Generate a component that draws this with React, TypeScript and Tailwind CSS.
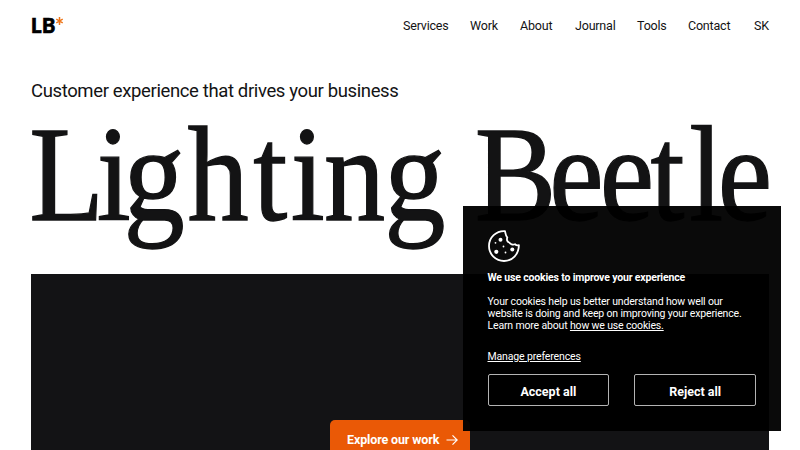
const navItems = [
  { label: "Services", className: "w-[45px]" },
  { label: "Work", className: "w-[28px]" },
  { label: "About", className: "w-[33px]" },
  { label: "Journal", className: "w-[40px]" },
  { label: "Tools", className: "w-[29px]" },
  { label: "Contact", className: "w-[44px]" },
  { label: "SK", className: "w-[15px]" },
]

function Logo() {
  return (
    <a href="#" className="flex h-5 items-start pb-[2px] font-['Lato',sans-serif] text-[20px] leading-[18px] font-black tracking-[0.5px] text-black [-webkit-text-stroke:0.7px_black]">
      LB
      <svg viewBox="0 0 8 9" className="mt-px h-2 w-[7px]" fill="none" stroke="#ee7518" strokeWidth="1.7">
        <path d="M4 0v9M.3 2.3l7.4 4.4M7.7 2.3L.3 6.7" />
      </svg>
    </a>
  )
}

function Header() {
  return (
    <header className="flex h-[52px] items-center justify-between">
      <Logo />
      <nav className="flex gap-[22px] text-[12.5px] leading-4 tracking-[-0.2px]">
        {navItems.map((item) => (
          <a key={item.label} href="#" className={`${item.className} whitespace-nowrap`}>
            {item.label}
          </a>
        ))}
      </nav>
    </header>
  )
}

function CookieIcon() {
  return (
    <svg viewBox="0 0 32 32" className="size-8" fill="none" stroke="white" strokeWidth="1.8" strokeLinejoin="round">
      <path d="M17 1.1C8 .6 1 7.5 1 16c0 8.300 6.700 15 15 15s14.800-6.700 14.900-15.800c-1.500.5-2.900.1-3.900-1-2.200 1-4.700-.1-5.800-1.700-2.100-.7-2.700-2.700-1.900-5-1.700-1.400-1.700-4-2.300-6.400z" />
      <g fill="white" stroke="none">
        <circle cx="12.5" cy="9.8" r="2" />
        <circle cx="8.3" cy="21.8" r="2.1" />
        <circle cx="24.3" cy="19.5" r="2" />
        <circle cx="7.5" cy="12.8" r=".9" />
        <circle cx="15.5" cy="16.5" r=".9" />
        <circle cx="17.5" cy="22.5" r=".9" />
      </g>
    </svg>
  )
}

function CookieBanner() {
  return (
    <aside className="absolute top-[205.5px] left-[462.5px] flex h-[225.5px] w-[318.5px] flex-col bg-black/96 px-[25px] pt-[24.5px] text-white">
      <CookieIcon />
      <h2 className="mt-[10px] text-[10.5px] leading-3 font-bold tracking-[-0.17px] whitespace-nowrap">
        We use cookies to improve your experience
      </h2>
      <p className="mt-[12px] text-[10.5px] leading-3 tracking-[-0.16px] whitespace-nowrap">
        Your cookies help us better understand how well our
        <br />
        website is doing and keep on improving your experience.
        <br />
        Learn more about{" "}
        <a href="#" className="underline">
          how we use cookies.
        </a>
      </p>
      <a href="#" className="mt-[19px] self-start text-[10.5px] leading-3 tracking-[-0.14px] underline">
        Manage preferences
      </a>
      <div className="mt-[11px] flex gap-[25px]">
        <button className="h-8 w-[122px] rounded-[2px] border border-white/70 pt-1 text-[12.5px] font-bold">Accept all</button>
        <button className="h-8 w-[122px] rounded-[2px] border border-white/70 pt-1 text-[12.5px] font-bold">Reject all</button>
      </div>
    </aside>
  )
}

export default function App() {
  return (
    <div className="relative h-[450px] w-[800px] overflow-hidden bg-white px-[31px] font-['Roboto',sans-serif] text-[#131314]">
      <Header />
      <main>
        <p className="mt-[27px] text-[18.5px] leading-6 tracking-[-0.37px] whitespace-nowrap">
          Customer experience that drives your business
        </p>
        <h1 className="flex h-[171px] w-[820px] origin-left scale-x-90 font-['Liberation_Serif',serif] text-[136px] leading-[142px] whitespace-nowrap [-webkit-text-stroke:1.3px_#131314]">
          <span className="w-[493px] shrink-0 -indent-[2px] tracking-[-1px]">
            <span className="tracking-[-8px]">L</span>
            <span className="tracking-[-8px]">i</span>
            <span className="tracking-[3px]">g</span>
            <span className="tracking-[5px]">h</span>
            <span className="tracking-[4px]">t</span>
            ing{" "}
          </span>
          <span className="tracking-[-4px]">
            <span className="tracking-[-8px]">B</span>
            ee
            <span className="tracking-[5px]">t</span>
            <span className="tracking-[-6px]">l</span>e
          </span>
        </h1>
        <section className="flex h-[176px] items-end justify-center bg-[#131315]">
          <a href="#" className="flex h-[30px] w-[140px] items-start gap-[6px] rounded-t-[5px] bg-[#ea5906] pt-[12px] pl-[17px] text-[12.5px] leading-4 font-bold tracking-[-0.13px] text-white">
            <span className="w-[93px] whitespace-nowrap">Explore our work</span>
            <svg viewBox="0 0 12 12" className="mt-[2px] size-3" fill="none" stroke="white" strokeWidth="1.2">
              <path d="M.5 6h10.5M6.5 1.3L11.2 6l-4.7 4.7" />
            </svg>
          </a>
        </section>
      </main>
      <CookieBanner />
    </div>
  )
}
